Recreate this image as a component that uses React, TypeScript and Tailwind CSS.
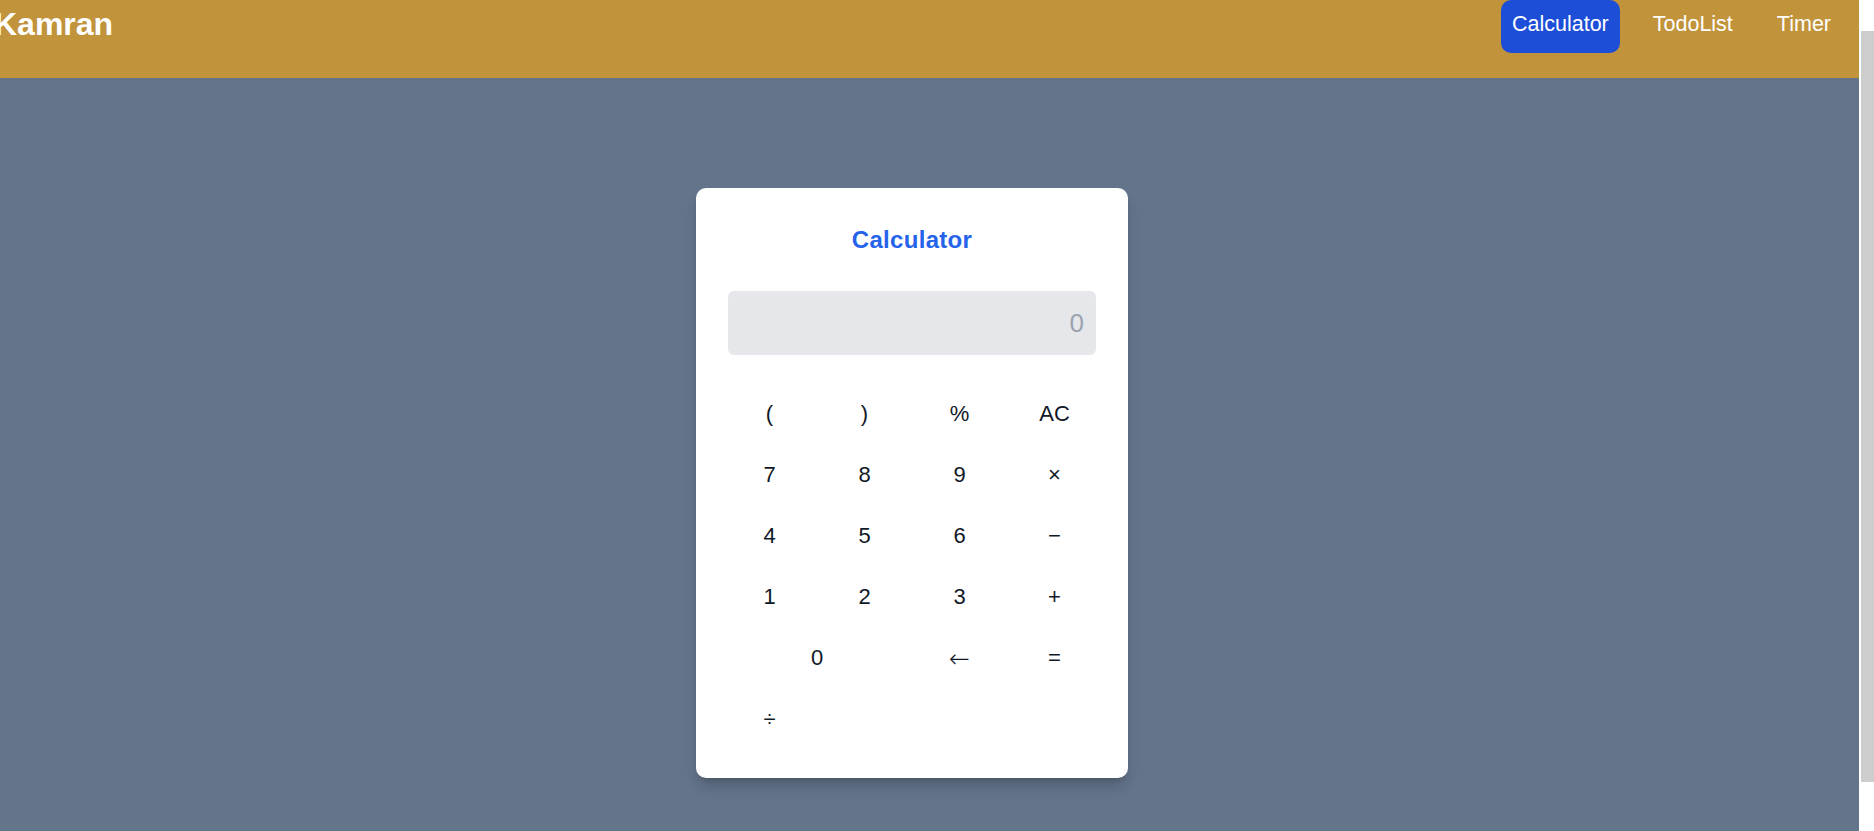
import { useState } from "react";

type Key = {
  label: string;
  value: string;
  wide?: boolean;
};

const keys: Key[] = [
  { label: "(", value: "(" },
  { label: ")", value: ")" },
  { label: "%", value: "%" },
  { label: "AC", value: "clear" },
  { label: "7", value: "7" },
  { label: "8", value: "8" },
  { label: "9", value: "9" },
  { label: "×", value: "*" },
  { label: "4", value: "4" },
  { label: "5", value: "5" },
  { label: "6", value: "6" },
  { label: "−", value: "-" },
  { label: "1", value: "1" },
  { label: "2", value: "2" },
  { label: "3", value: "3" },
  { label: "+", value: "+" },
  { label: "0", value: "0", wide: true },
  { label: "←", value: "back" },
  { label: "=", value: "=" },
  { label: "÷", value: "/" },
];

const navItems = ["Calculator", "TodoList", "Timer"];

function Header() {
  return (
    <header className="flex h-[78px] shrink-0 items-start justify-between bg-[#c1933b] pr-[17px]">
      <h1 className="ml-[-6px] mt-[6px] text-[32px] font-bold leading-9 text-white">Kamran</h1>
      <nav className="flex items-start gap-[22px]">
        {navItems.map((item) => (
          <button
            key={item}
            type="button"
            className={
              item === "Calculator"
                ? "rounded-[10px] bg-[#1d4ed8] px-[11px] pb-[17px] pt-3 text-[21.5px] leading-6 text-white"
                : "rounded-[10px] px-[11px] pb-[17px] pt-3 text-[21.5px] leading-6 text-white"
            }
          >
            {item}
          </button>
        ))}
      </nav>
    </header>
  );
}

function Calculator() {
  const [expression, setExpression] = useState("");

  const press = (key: Key) => {
    if (key.value === "clear") {
      setExpression("");
      return;
    }
    if (key.value === "back") {
      setExpression((prev) => prev.slice(0, -1));
      return;
    }
    if (key.value === "=") {
      try {
        // eslint-disable-next-line no-new-func
        const result = Function(`"use strict"; return (${expression || "0"})`)();
        setExpression(String(result));
      } catch {
        setExpression("Error");
      }
      return;
    }
    setExpression((prev) => prev + key.value);
  };

  return (
    <section className="ml-[696px] mt-[110px] w-[432px] rounded-[10px] bg-white px-8 pb-[35px] pt-9 shadow-lg shadow-black/20">
      <h2 className="mb-[35px] text-center text-2xl font-bold leading-8 tracking-[0.3px] text-[#2563eb]">
        Calculator
      </h2>

      <div className="flex h-16 items-center justify-end rounded-md bg-[#e5e7eb] pl-3 pr-[12px] text-[26px] text-[#9ca3af]">
        {expression || "0"}
      </div>

      <div className="mt-[34px] grid grid-cols-4 gap-3">
        {keys.map((key) => (
          <button
            key={key.label}
            type="button"
            onClick={() => press(key)}
            className={
              key.wide
                ? "col-span-2 flex h-[49px] items-center justify-center text-[22px] text-[#111827]"
                : key.value === "back"
                  ? "flex h-[49px] items-center justify-center pt-[3px] font-['DejaVu_Sans',sans-serif] text-[25px] font-light text-[#111827]"
                  : "flex h-[49px] items-center justify-center text-[22px] text-[#111827]"
            }
          >
            {key.label}
          </button>
        ))}
      </div>
    </section>
  );
}

export default function App() {
  return (
    <div className="flex h-[831px] w-full overflow-hidden font-['Liberation_Sans',Arial,sans-serif]">
      <div className="flex min-w-0 flex-1 flex-col bg-[#64748b]">
        <Header />
        <main className="flex-1">
          <Calculator />
        </main>
      </div>
      <div className="w-[15px] shrink-0 bg-white">
        <div className="ml-[2px] mt-[31px] h-[751px] bg-[#cdcdcd]" />
      </div>
    </div>
  );
}
